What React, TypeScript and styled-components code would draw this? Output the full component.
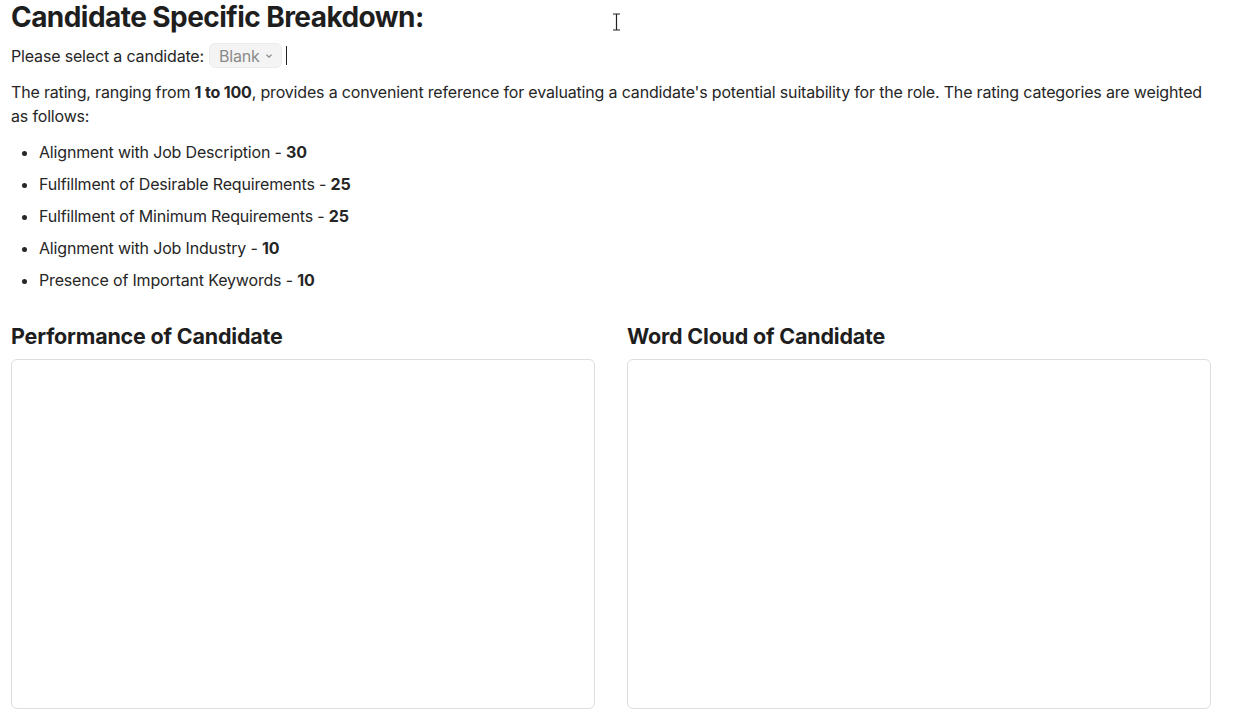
import React from 'react';
import styled, { createGlobalStyle } from 'styled-components';

const GlobalStyle = createGlobalStyle`
  html, body {
    margin: 0;
    padding: 0;
    background: #ffffff;
  }
  body {
    font-family: Inter, "Noto Sans", sans-serif;
    color: #262626;
    letter-spacing: -0.17px;
  }
`;

const Page = styled.div`
  position: relative;
  padding: 0 23px 0 11px;
  width: 1234px;
  height: 724px;
  box-sizing: border-box;
  overflow: hidden;
`;

const Title = styled.h1`
  margin: 0;
  font-size: 28px;
  line-height: 34px;
  font-weight: 700;
  color: #1e1e1e;
  letter-spacing: -0.55px;
`;

const SelectRow = styled.div`
  display: flex;
  align-items: center;
  gap: 5px;
  margin-top: 9px;
  font-size: 16px;
  line-height: 24px;
`;

const Dropdown = styled.button`
  display: inline-flex;
  align-items: center;
  gap: 5px;
  height: 25px;
  padding: 0 8px 0 9px;
  border: 1px solid #ececec;
  border-radius: 6px;
  background: #f4f4f4;
  color: #8a8a8a;
  font-family: inherit;
  font-size: 16px;
  letter-spacing: -0.17px;
`;

const Caret = styled.span`
  width: 1px;
  height: 19px;
  margin-left: -1px;
  background: #222;
`;

const Paragraph = styled.p`
  margin: 12px 0 0;
  font-size: 16px;
  line-height: 24px;
  color: #262626;
`;

const List = styled.ul`
  margin: 12px 0 0;
  padding-left: 28px;
  font-size: 16px;
  line-height: 24px;
`;

const Item = styled.li`
  margin-bottom: 8px;
  color: #262626;
`;

const Columns = styled.div`
  display: grid;
  grid-template-columns: 1fr 1fr;
  gap: 32px;
  margin-top: 30px;
`;

const Column = styled.section`
  display: flex;
  flex-direction: column;
`;

const SectionTitle = styled.h2`
  margin: 0 0 9px;
  font-size: 21.5px;
  line-height: 28px;
  font-weight: 700;
  color: #1e1e1e;
  letter-spacing: -0.2px;
`;

const ChartBox = styled.div`
  height: 348px;
  border: 1px solid #dedede;
  border-radius: 6px;
  background: #fff;
`;

const Cursor = styled.svg`
  position: absolute;
  left: 612px;
  top: 13px;
`;

const weights = [
  ['Alignment with Job Description', '30'],
  ['Fulfillment of Desirable Requirements', '25'],
  ['Fulfillment of Minimum Requirements', '25'],
  ['Alignment with Job Industry', '10'],
  ['Presence of Important Keywords', '10'],
];

export default function App() {
  return (
    <Page>
      <GlobalStyle />
      <Title>Candidate Specific Breakdown:</Title>
      <SelectRow>
        <span>Please select a candidate:</span>
        <Dropdown>
          Blank
          <svg width="8" height="6" viewBox="0 0 8 6" fill="none">
            <path d="M1.5 1.8 L4 4.2 L6.5 1.8" stroke="#8a8a8a" strokeWidth="1.2" />
          </svg>
        </Dropdown>
        <Caret />
      </SelectRow>
      <Paragraph>
        The rating, ranging from <b>1 to 100</b>, provides a convenient reference for evaluating a
        candidate's potential suitability for the role. The rating categories are weighted as
        follows:
      </Paragraph>
      <List>
        {weights.map(([label, value]) => (
          <Item key={label}>
            {label} - <b>{value}</b>
          </Item>
        ))}
      </List>
      <Columns>
        <Column>
          <SectionTitle>Performance of Candidate</SectionTitle>
          <ChartBox />
        </Column>
        <Column>
          <SectionTitle>Word Cloud of Candidate</SectionTitle>
          <ChartBox />
        </Column>
      </Columns>
      <Cursor width="9" height="18" viewBox="0 0 9 18">
        <path d="M1 1 H8 M4.5 1 V17 M1 17 H8" stroke="#222" strokeWidth="1.2" fill="none" />
      </Cursor>
    </Page>
  );
}
